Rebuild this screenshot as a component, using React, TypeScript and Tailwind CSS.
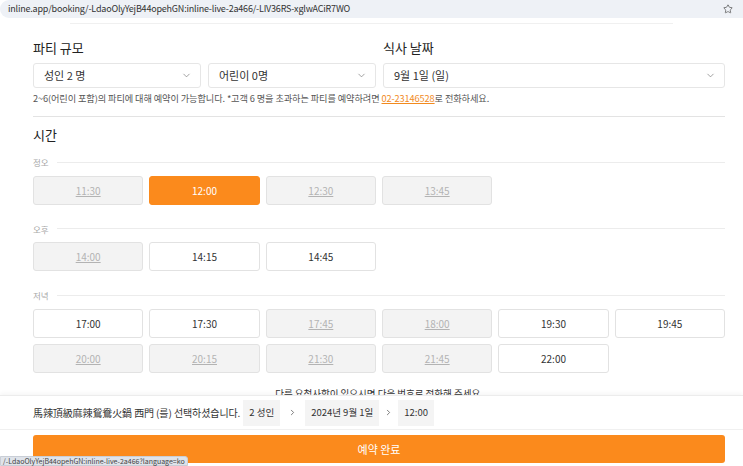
import { ChevronDown, ChevronRight, Star } from 'lucide-react'

type Slot = { t: string; off?: boolean; sel?: boolean }

const groups: { label: string; slots: Slot[] }[] = [
    {
        label: '정오',
        slots: [{ t: '11:30', off: true }, { t: '12:00', sel: true }, { t: '12:30', off: true }, { t: '13:45', off: true }],
    },
    {
        label: '오후',
        slots: [{ t: '14:00', off: true }, { t: '14:15' }, { t: '14:45' }],
    },
    {
        label: '저녁',
        slots: [
            { t: '17:00' },
            { t: '17:30' },
            { t: '17:45', off: true },
            { t: '18:00', off: true },
            { t: '19:30' },
            { t: '19:45' },
            { t: '20:00', off: true },
            { t: '20:15', off: true },
            { t: '21:30', off: true },
            { t: '21:45', off: true },
            { t: '22:00' },
        ],
    },
]

function Select({ value, className }: { value: string; className?: string }) {
    return (
        <div
            className={`h-[25px] flex items-center justify-between pl-[10px] pr-[8px] border border-[#e6e6e6] rounded-[3px] bg-white text-[11px] text-[#333] ${className ?? ''}`}
        >
            <span>{value}</span>
            <ChevronDown size={11} strokeWidth={1.5} className="text-[#777]" />
        </div>
    )
}

function SlotButton({ slot }: { slot: Slot }) {
    if (slot.sel)
        return (
            <div className="h-[29px] flex items-center justify-center rounded-[3px] bg-[#fb8a1c] border border-[#fb8a1c] text-white text-[10px]">
                {slot.t}
            </div>
        )
    if (slot.off)
        return (
            <div className="h-[29px] flex items-center justify-center rounded-[3px] bg-[#f3f3f3] border border-[#e2e2e2] text-[#b3b3b3] text-[10px] underline">
                {slot.t}
            </div>
        )
    return (
        <div className="h-[29px] flex items-center justify-center rounded-[3px] bg-white border border-[#e2e2e2] text-[#333] text-[10px]">
            {slot.t}
        </div>
    )
}

function Chip({ children }: { children: React.ReactNode }) {
    return <span className="h-[26px] px-[6px] flex items-center bg-[#f4f4f4] text-[9.5px] text-[#333]">{children}</span>
}

export default function App() {
    return (
        <div
            className="relative w-[743px] h-[466px] overflow-hidden bg-white"
            style={{ fontFamily: '"Noto Sans CJK KR", "Noto Sans", sans-serif' }}
        >
            {/* browser address bar */}
            <div className="h-[18px] bg-[#eef1f6] rounded-l-[9px] flex items-center justify-between pl-[8px] pr-[10px]">
                <span className="text-[9px] text-[#333] tracking-[-0.2px]">
                    inline.app/booking/-LdaoOlyYejB44opehGN:inline-live-2a466/-LIV36RS-xglwACiR7WO
                </span>
                <Star size={10} strokeWidth={1.6} className="text-[#444]" />
            </div>
            <div className="mx-[70px] mt-[5px] h-px bg-[#f0f0f0]" />

            <div className="px-[33px] pr-[18px] pt-[14px]">
                <div className="flex gap-[7px]">
                    <div className="flex-1">
                        <div className="text-[13px] text-[#222] mb-[5px]">파티 규모</div>
                        <div className="flex gap-[7px]">
                            <Select value="성인 2 명" className="flex-1" />
                            <Select value="어린이 0명" className="flex-1" />
                        </div>
                    </div>
                    <div className="w-[342px]">
                        <div className="text-[13px] text-[#222] mb-[5px]">식사 날짜</div>
                        <Select value="9월 1일 (일)" />
                    </div>
                </div>
                <p className="mt-[4px] text-[9.2px] text-[#555] tracking-[-0.1px]">
                    2~6(어린이 포함)의 파티에 대해 예약이 가능합니다. *고객 6 명을 초과하는 파티를 예약하려면{' '}
                    <span className="text-[#f28a1e] underline">02-23146528</span>로 전화하세요.
                </p>
                <div className="mt-[11px] h-px bg-[#e3e3e3]" />

                <div className="mt-[8px] text-[13px] text-[#222]">시간</div>

                {groups.map((g, i) => (
                    <div key={g.label} className={i === 0 ? 'mt-[11px]' : 'mt-[18px]'}>
                        <div className="flex items-center gap-[8px] mb-[7px]">
                            <span className="text-[8.5px] text-[#a8a8a8]">{g.label}</span>
                            <div className="flex-1 h-px bg-[#ececec]" />
                        </div>
                        <div className="grid grid-cols-6 gap-[6px]">
                            {g.slots.map((s) => (
                                <SlotButton key={s.t} slot={s} />
                            ))}
                        </div>
                    </div>
                ))}

                <p className="mt-[13px] text-center text-[9.5px] text-[#333]">
                    다른 요청사항이 있으시면 다음 번호로 전화해 주세요.
                </p>
            </div>

            {/* fixed booking footer */}
            <div className="absolute left-0 right-0 bottom-0 h-[71px] bg-white border-t border-[#ececec] shadow-[0_-2px_4px_rgba(0,0,0,0.04)]">
                <div className="flex items-center h-[34px] px-[33px] border-b border-[#f0f0f0]">
                    <span className="text-[10px] text-[#333] mr-[3px] tracking-[-0.1px]">
                        馬辣頂級麻辣鴛鴦火鍋 西門 (를) 선택하셨습니다.
                    </span>
                    <Chip>2 성인</Chip>
                    <ChevronRight size={9} strokeWidth={2} className="text-[#555] mx-[8px]" />
                    <Chip>2024년 9월 1일</Chip>
                    <ChevronRight size={9} strokeWidth={2} className="text-[#555] mx-[5px]" />
                    <Chip>12:00</Chip>
                </div>
                <div className="px-[33px] pr-[18px] pt-[5px]">
                    <div className="h-[28px] rounded-[3px] bg-[#fb8a1c] flex items-center justify-center text-white text-[11px]">
                        예약 완료
                    </div>
                </div>
            </div>

            {/* browser status tooltip */}
            <div className="absolute left-0 bottom-0 h-[10px] px-[2px] flex items-center bg-[#dfe3ea] border border-[#c9ced6] rounded-tr-[3px] text-[7px] text-[#444]">
                /-LdaoOlyYejB44opehGN:inline-live-2a466?language=ko
            </div>
        </div>
    )
}
